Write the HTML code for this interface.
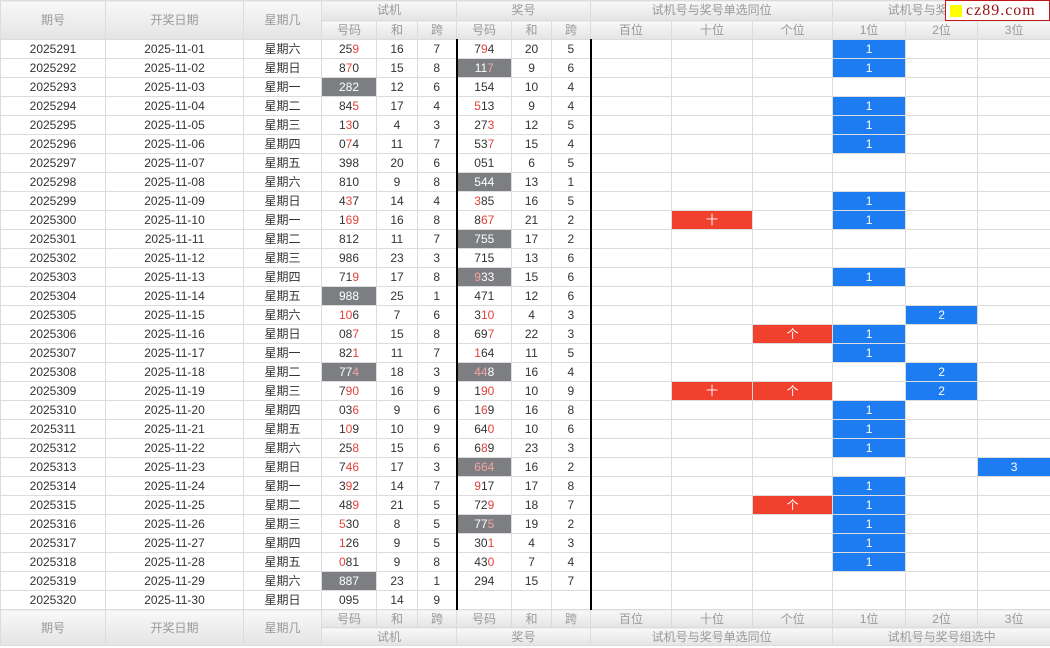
<!DOCTYPE html>
<html><head><meta charset="utf-8">
<style>
*{margin:0;padding:0;box-sizing:border-box}
body{width:1050px;height:648px;overflow:hidden;background:#fff;font-family:"Liberation Sans","Noto Sans CJK SC",sans-serif;font-size:12px;color:#333;position:relative}
table{border-collapse:collapse;table-layout:fixed;width:1050px}
td,th{border:1px solid #dcdcdc;text-align:center;height:19px;line-height:17px;padding:0;white-space:nowrap;overflow:hidden}
th{background:linear-gradient(#f8f8f8,#e4e4e4);color:#999;font-weight:normal}
th.h2{height:20px}
tr.f th{height:18px;line-height:16px}
i{font-style:normal;color:#e8403a}
td.g{background:#7c7e82;color:#fff}
td.g i{color:#f6a3a0}
td.b{border-left:2px solid #000}
td.u{background:#1d7cf2;color:#fff}
td.r{background:#f2402f;color:#fff}
#logo{position:absolute;left:945px;top:0;width:105px;height:21px;background:#fff;border:1px solid #c01818;font-family:"Liberation Serif",serif;font-size:16px;letter-spacing:1px;color:#9a1010;line-height:19px;padding-left:20px}
#logo span{position:absolute;left:4px;top:4px;width:12px;height:12px;background:#ffff00}
</style></head><body>
<table>
<colgroup><col style="width:105px"><col style="width:138px"><col style="width:78px"><col style="width:55px"><col style="width:41px"><col style="width:39px"><col style="width:55px"><col style="width:40px"><col style="width:39px"><col style="width:81px"><col style="width:81px"><col style="width:80px"><col style="width:73px"><col style="width:72px"><col style="width:73px"></colgroup>
<tr><th rowspan="2">期号</th><th rowspan="2">开奖日期</th><th rowspan="2">星期几</th><th colspan="3" class="h2">试机</th><th colspan="3">奖号</th><th colspan="3">试机号与奖号单选同位</th><th colspan="3">试机号与奖号组选中</th></tr>
<tr><th>号码</th><th>和</th><th>跨</th><th>号码</th><th>和</th><th>跨</th><th>百位</th><th>十位</th><th>个位</th><th>1位</th><th>2位</th><th>3位</th></tr>
<tr><td>2025291</td><td>2025-11-01</td><td>星期六</td><td>25<i>9</i></td><td>16</td><td>7</td><td class="b">7<i>9</i>4</td><td>20</td><td>5</td><td class="b"></td><td></td><td></td><td class="u">1</td><td></td><td></td></tr>
<tr><td>2025292</td><td>2025-11-02</td><td>星期日</td><td>8<i>7</i>0</td><td>15</td><td>8</td><td class="b g">11<i>7</i></td><td>9</td><td>6</td><td class="b"></td><td></td><td></td><td class="u">1</td><td></td><td></td></tr>
<tr><td>2025293</td><td>2025-11-03</td><td>星期一</td><td class="g">282</td><td>12</td><td>6</td><td class="b">154</td><td>10</td><td>4</td><td class="b"></td><td></td><td></td><td></td><td></td><td></td></tr>
<tr><td>2025294</td><td>2025-11-04</td><td>星期二</td><td>84<i>5</i></td><td>17</td><td>4</td><td class="b"><i>5</i>13</td><td>9</td><td>4</td><td class="b"></td><td></td><td></td><td class="u">1</td><td></td><td></td></tr>
<tr><td>2025295</td><td>2025-11-05</td><td>星期三</td><td>1<i>3</i>0</td><td>4</td><td>3</td><td class="b">27<i>3</i></td><td>12</td><td>5</td><td class="b"></td><td></td><td></td><td class="u">1</td><td></td><td></td></tr>
<tr><td>2025296</td><td>2025-11-06</td><td>星期四</td><td>0<i>7</i>4</td><td>11</td><td>7</td><td class="b">53<i>7</i></td><td>15</td><td>4</td><td class="b"></td><td></td><td></td><td class="u">1</td><td></td><td></td></tr>
<tr><td>2025297</td><td>2025-11-07</td><td>星期五</td><td>398</td><td>20</td><td>6</td><td class="b">051</td><td>6</td><td>5</td><td class="b"></td><td></td><td></td><td></td><td></td><td></td></tr>
<tr><td>2025298</td><td>2025-11-08</td><td>星期六</td><td>810</td><td>9</td><td>8</td><td class="b g">544</td><td>13</td><td>1</td><td class="b"></td><td></td><td></td><td></td><td></td><td></td></tr>
<tr><td>2025299</td><td>2025-11-09</td><td>星期日</td><td>4<i>3</i>7</td><td>14</td><td>4</td><td class="b"><i>3</i>85</td><td>16</td><td>5</td><td class="b"></td><td></td><td></td><td class="u">1</td><td></td><td></td></tr>
<tr><td>2025300</td><td>2025-11-10</td><td>星期一</td><td>1<i>69</i></td><td>16</td><td>8</td><td class="b">8<i>67</i></td><td>21</td><td>2</td><td class="b"></td><td class="r">十</td><td></td><td class="u">1</td><td></td><td></td></tr>
<tr><td>2025301</td><td>2025-11-11</td><td>星期二</td><td>812</td><td>11</td><td>7</td><td class="b g">755</td><td>17</td><td>2</td><td class="b"></td><td></td><td></td><td></td><td></td><td></td></tr>
<tr><td>2025302</td><td>2025-11-12</td><td>星期三</td><td>986</td><td>23</td><td>3</td><td class="b">715</td><td>13</td><td>6</td><td class="b"></td><td></td><td></td><td></td><td></td><td></td></tr>
<tr><td>2025303</td><td>2025-11-13</td><td>星期四</td><td>71<i>9</i></td><td>17</td><td>8</td><td class="b g"><i>9</i>33</td><td>15</td><td>6</td><td class="b"></td><td></td><td></td><td class="u">1</td><td></td><td></td></tr>
<tr><td>2025304</td><td>2025-11-14</td><td>星期五</td><td class="g">988</td><td>25</td><td>1</td><td class="b">471</td><td>12</td><td>6</td><td class="b"></td><td></td><td></td><td></td><td></td><td></td></tr>
<tr><td>2025305</td><td>2025-11-15</td><td>星期六</td><td><i>10</i>6</td><td>7</td><td>6</td><td class="b">3<i>10</i></td><td>4</td><td>3</td><td class="b"></td><td></td><td></td><td></td><td class="u">2</td><td></td></tr>
<tr><td>2025306</td><td>2025-11-16</td><td>星期日</td><td>08<i>7</i></td><td>15</td><td>8</td><td class="b">69<i>7</i></td><td>22</td><td>3</td><td class="b"></td><td></td><td class="r">个</td><td class="u">1</td><td></td><td></td></tr>
<tr><td>2025307</td><td>2025-11-17</td><td>星期一</td><td>82<i>1</i></td><td>11</td><td>7</td><td class="b"><i>1</i>64</td><td>11</td><td>5</td><td class="b"></td><td></td><td></td><td class="u">1</td><td></td><td></td></tr>
<tr><td>2025308</td><td>2025-11-18</td><td>星期二</td><td class="g">77<i>4</i></td><td>18</td><td>3</td><td class="b g"><i>44</i>8</td><td>16</td><td>4</td><td class="b"></td><td></td><td></td><td></td><td class="u">2</td><td></td></tr>
<tr><td>2025309</td><td>2025-11-19</td><td>星期三</td><td>7<i>90</i></td><td>16</td><td>9</td><td class="b">1<i>90</i></td><td>10</td><td>9</td><td class="b"></td><td class="r">十</td><td class="r">个</td><td></td><td class="u">2</td><td></td></tr>
<tr><td>2025310</td><td>2025-11-20</td><td>星期四</td><td>03<i>6</i></td><td>9</td><td>6</td><td class="b">1<i>6</i>9</td><td>16</td><td>8</td><td class="b"></td><td></td><td></td><td class="u">1</td><td></td><td></td></tr>
<tr><td>2025311</td><td>2025-11-21</td><td>星期五</td><td>1<i>0</i>9</td><td>10</td><td>9</td><td class="b">64<i>0</i></td><td>10</td><td>6</td><td class="b"></td><td></td><td></td><td class="u">1</td><td></td><td></td></tr>
<tr><td>2025312</td><td>2025-11-22</td><td>星期六</td><td>25<i>8</i></td><td>15</td><td>6</td><td class="b">6<i>8</i>9</td><td>23</td><td>3</td><td class="b"></td><td></td><td></td><td class="u">1</td><td></td><td></td></tr>
<tr><td>2025313</td><td>2025-11-23</td><td>星期日</td><td>7<i>46</i></td><td>17</td><td>3</td><td class="b g"><i>664</i></td><td>16</td><td>2</td><td class="b"></td><td></td><td></td><td></td><td></td><td class="u">3</td></tr>
<tr><td>2025314</td><td>2025-11-24</td><td>星期一</td><td>3<i>9</i>2</td><td>14</td><td>7</td><td class="b"><i>9</i>17</td><td>17</td><td>8</td><td class="b"></td><td></td><td></td><td class="u">1</td><td></td><td></td></tr>
<tr><td>2025315</td><td>2025-11-25</td><td>星期二</td><td>48<i>9</i></td><td>21</td><td>5</td><td class="b">72<i>9</i></td><td>18</td><td>7</td><td class="b"></td><td></td><td class="r">个</td><td class="u">1</td><td></td><td></td></tr>
<tr><td>2025316</td><td>2025-11-26</td><td>星期三</td><td><i>5</i>30</td><td>8</td><td>5</td><td class="b g">77<i>5</i></td><td>19</td><td>2</td><td class="b"></td><td></td><td></td><td class="u">1</td><td></td><td></td></tr>
<tr><td>2025317</td><td>2025-11-27</td><td>星期四</td><td><i>1</i>26</td><td>9</td><td>5</td><td class="b">30<i>1</i></td><td>4</td><td>3</td><td class="b"></td><td></td><td></td><td class="u">1</td><td></td><td></td></tr>
<tr><td>2025318</td><td>2025-11-28</td><td>星期五</td><td><i>0</i>81</td><td>9</td><td>8</td><td class="b">43<i>0</i></td><td>7</td><td>4</td><td class="b"></td><td></td><td></td><td class="u">1</td><td></td><td></td></tr>
<tr><td>2025319</td><td>2025-11-29</td><td>星期六</td><td class="g">887</td><td>23</td><td>1</td><td class="b">294</td><td>15</td><td>7</td><td class="b"></td><td></td><td></td><td></td><td></td><td></td></tr>
<tr><td>2025320</td><td>2025-11-30</td><td>星期日</td><td>095</td><td>14</td><td>9</td><td class="b"></td><td></td><td></td><td class="b"></td><td></td><td></td><td></td><td></td><td></td></tr>
<tr class="f"><th rowspan="2">期号</th><th rowspan="2">开奖日期</th><th rowspan="2">星期几</th><th>号码</th><th>和</th><th>跨</th><th>号码</th><th>和</th><th>跨</th><th>百位</th><th>十位</th><th>个位</th><th>1位</th><th>2位</th><th>3位</th></tr>
<tr class="f"><th colspan="3">试机</th><th colspan="3">奖号</th><th colspan="3">试机号与奖号单选同位</th><th colspan="3">试机号与奖号组选中</th></tr>
</table>
<div id="logo"><span></span>cz89.com</div>
</body></html>
